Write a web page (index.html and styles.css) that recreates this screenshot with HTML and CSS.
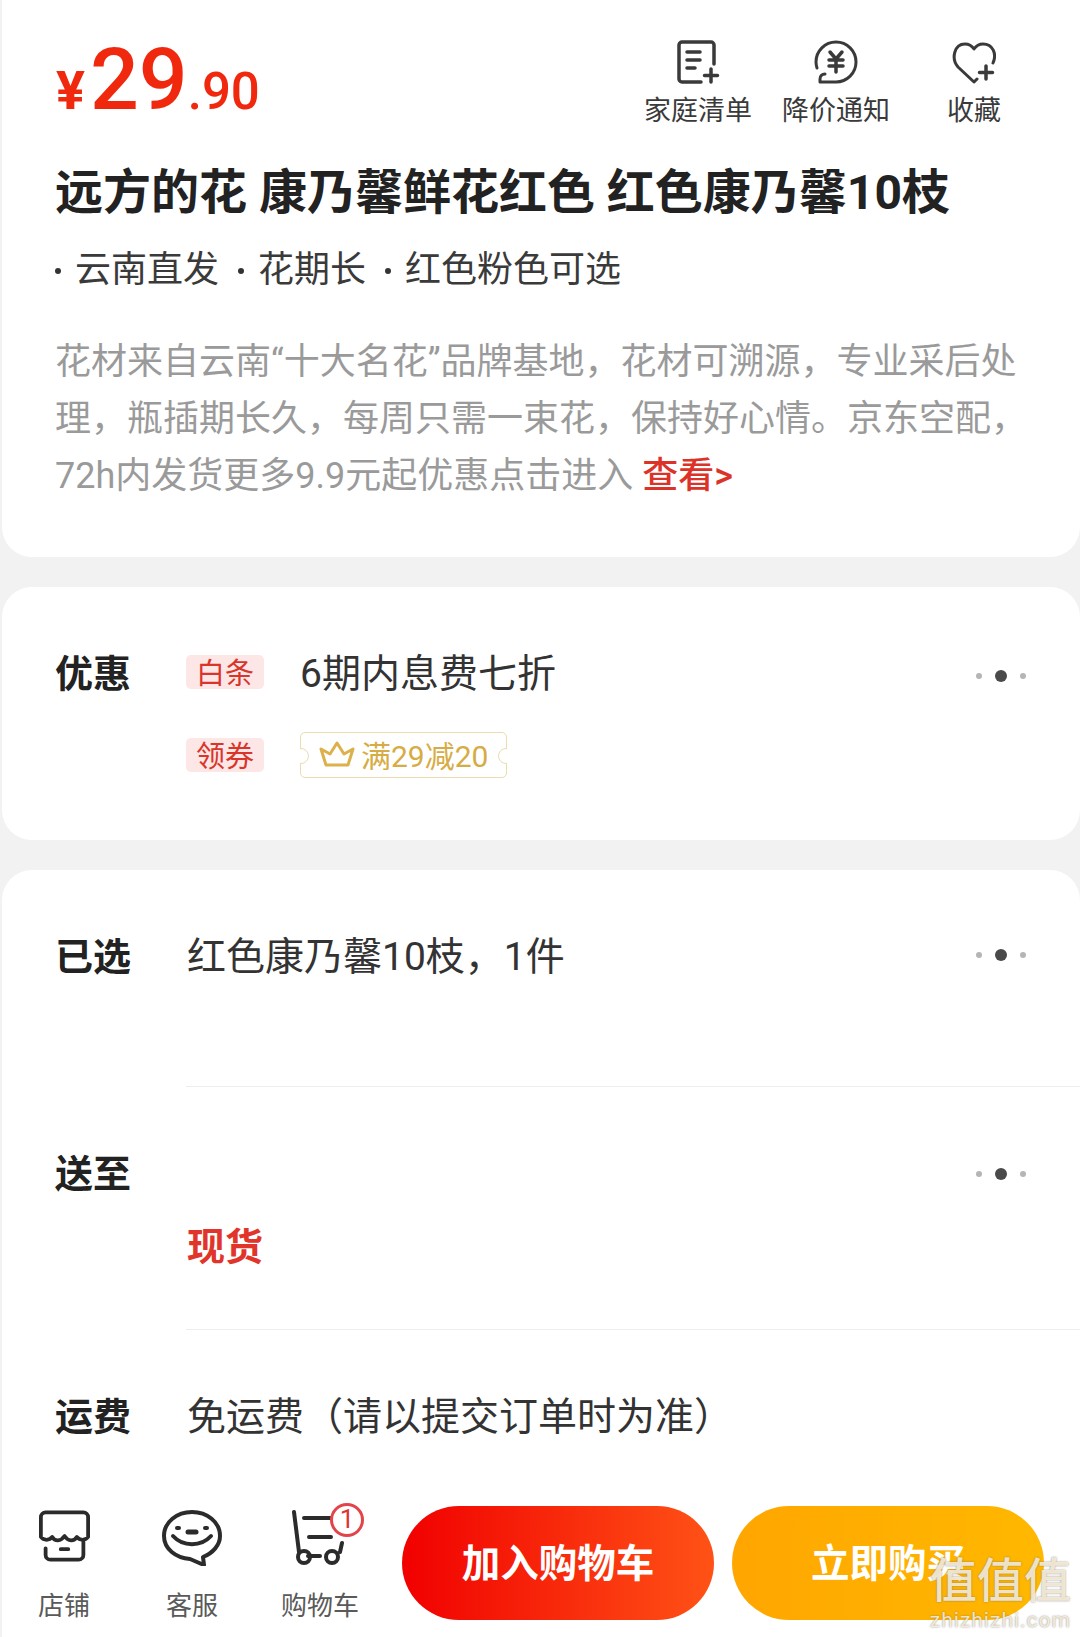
FILE: index.html
```html
<!DOCTYPE html>
<html lang="zh-CN">
  <head>
    <meta charset="UTF-8" />
    <title>远方的花 康乃馨鲜花红色</title>
    <link rel="stylesheet" href="styles.css">
  </head>
  <body>
    <main class="content">
      <section class="card card-top">
        <div class="price-row">
          <div class="price"><span class="yen">¥</span><span class="int">29</span><span class="dec">.90</span></div>
          <div class="actions">
            <div class="action">
              <svg viewBox="0 0 44 44" width="44" height="44" fill="none" stroke="#3a3a3a" stroke-width="3.500" stroke-linecap="round" stroke-linejoin="round">
                <path d="M38 24V5a3 3 0 0 0-3-3H6a3 3 0 0 0-3 3v34a3 3 0 0 0 3 3h19"/>
                <path d="M11 12h13M11 20h13M11 28h8"/>
                <path d="M35 29v13M28.500 35.500h13"/>
              </svg>
              <span>家庭清单</span>
            </div>
            <div class="action">
              <svg viewBox="0 0 44 44" width="44" height="44" fill="none" stroke="#3a3a3a" stroke-width="3" stroke-linecap="round" stroke-linejoin="round">
                <path d="M3 28a20 20 0 0 1-1-6C2 11 11 2 22 2s20 9 20 20-9 20-20 20H6v-3c0-3 2-5 5-5"/>
                <path d="M16 12l6 7 6-7M15 20h14M15 26h14M22 19v13" stroke-width="3.500"/>
              </svg>
              <span>降价通知</span>
            </div>
            <div class="action">
              <svg viewBox="0 0 44 44" width="44" height="44" fill="none" stroke="#3a3a3a" stroke-width="3" stroke-linecap="round" stroke-linejoin="round">
                <path d="M25 39l-3 3L6 27C-1 19 2 4 13 4c4 0 7 2 9 5 2-3 5-5 9-5 10 0 14 10 10 19"/>
                <path d="M34 26v13M27.500 32.500h13" stroke-width="3.500"/>
              </svg>
              <span>收藏</span>
            </div>
          </div>
        </div>
        <h1 class="title">远方的花 康乃馨鲜花红色 红色康乃馨10枝</h1>
        <ul class="points">
          <li>云南直发</li>
          <li>花期长</li>
          <li>红色粉色可选</li>
        </ul>
        <p class="desc">花材来自云南“十大名花”品牌基地，花材可溯源，专业采后处理，瓶插期长久，每周只需一束花，保持好心情。京东空配，72h内发货更多9.9元起优惠点击进入 <a class="more">查看&gt;</a></p>
      </section>

      <section class="card card-promo">
        <div class="promo-row">
          <h3 class="label">优惠</h3>
          <span class="tag">白条</span>
          <span class="value promo-text">6期内息费七折</span>
          <div class="dots"><i></i><i></i><i></i></div>
        </div>
        <div class="promo-row promo-second">
          <span class="tag">领券</span>
          <span class="coupon">
            <svg viewBox="0 0 36 26" width="36" height="26" fill="none" stroke="#dcb04a" stroke-width="3" stroke-linejoin="round">
              <path d="M7 24h22l5-16-9 5-7-11-7 11-9-5z"/>
            </svg>
            满29减20
          </span>
        </div>
      </section>

      <section class="card card-info">
        <div class="info-row row-selected">
          <h3 class="label">已选</h3>
          <span class="value">红色康乃馨10枝，1件</span>
          <div class="dots"><i></i><i></i><i></i></div>
        </div>
        <div class="info-row row-ship">
          <h3 class="label">送至</h3>
          <div class="dots"><i></i><i></i><i></i></div>
          <strong class="stock">现货</strong>
        </div>
        <div class="info-row row-fee">
          <h3 class="label">运费</h3>
          <span class="value">免运费（请以提交订单时为准）</span>
        </div>
      </section>
    </main>

    <footer class="bar">
      <div class="bar-item item-shop">
        <svg viewBox="0 0 54 54" fill="none" stroke="#2b2b2b" stroke-width="4" stroke-linecap="round" stroke-linejoin="round">
          <path d="M7 2h40a5 5 0 0 1 5 5v21c-3 4-9 4-12 0-3 5-9 5-13-1-4 6-10 6-13 1-3 4-9 4-12 0V7a5 5 0 0 1 5-5z"/>
          <path d="M7 40v7a5 5 0 0 0 5 5h30a5 5 0 0 0 5-5V33M23 41h8"/>
        </svg>
        <span>店铺</span>
      </div>
      <div class="bar-item item-service">
        <svg viewBox="0 0 60 56" width="60" height="56" fill="none" stroke="#2b2b2b" stroke-width="4" stroke-linecap="round" stroke-linejoin="round">
          <path d="M30 2C15 2 2 12 2 26c0 13 12 22 26 23l14 6-1-8c10-4 17-12 17-21C58 12 45 2 30 2z"/>
          <path d="M11 26c10 11 28 11 38 0M15 18h2M43 18h2"/>
          <path d="M26 22h8" stroke-width="5"/>
        </svg>
        <span>客服</span>
      </div>
      <div class="bar-item item-cart">
        <div class="cart-icon">
          <svg viewBox="0 0 56 56" width="56" height="56" fill="none" stroke="#2b2b2b" stroke-width="4" stroke-linecap="round" stroke-linejoin="round">
            <path d="M2 2l5 40M12 8h28M17 27h22M16 46h12M50 33l-2 9"/>
            <circle cx="12" cy="47" r="6"/>
            <circle cx="40" cy="47" r="6"/>
          </svg>
          <span class="badge">1</span>
        </div>
        <span>购物车</span>
      </div>
      <button class="btn btn-cart">加入购物车</button>
      <button class="btn btn-buy">立即购买</button>
      <div class="watermark">
        <span class="wm-logo">值值值</span>
        <span class="wm-url">zhizhizhi.com</span>
      </div>
    </footer>
  </body>
</html>
```
FILE: styles.css
```css
* {
  box-sizing: border-box;
}

body {
  margin: 0;
  width: 1080px;
  height: 1637px;
  overflow: hidden;
  display: flex;
  flex-direction: column;
  position: relative;
  border-left: 2px solid #f2f2f2;
  background-color: #f2f2f2;
  color: #2b2b2b;
  font-family: "Roboto", "Noto Sans CJK SC", sans-serif;
}

.content {
  flex: 1;
  min-height: 0;
  overflow: hidden;
  display: flex;
  flex-direction: column;
}

.card {
  background-color: #fff;
  border-radius: 30px;
  margin-bottom: 30px;
  flex-shrink: 0;
}

/* top card */
.card-top {
  height: 557px;
  padding: 0 53px;
  border-radius: 0 0 30px 30px;
}

.price-row {
  display: flex;
  justify-content: space-between;
  height: 140px;
}

.price {
  color: #f0290e;
  font-weight: 500;
  padding-top: 29px;
  margin-left: 1px;
}

.price .yen {
  font-size: 54px;
  font-weight: 700;
}

.price .int {
  font-size: 86px;
  margin-left: 5px;
}

.price .dec {
  font-size: 51px;
}

.actions {
  display: flex;
  padding-top: 40px;
  margin-right: -16px;
}

.action {
  width: 138px;
  display: flex;
  flex-direction: column;
  align-items: center;
  gap: 8px;
  font-size: 27px;
  line-height: 38px;
  color: #3a3a3a;
}

.title {
  margin: 21px 0 0;
  font-size: 48px;
  line-height: 64px;
  font-weight: 700;
  color: #222;
  white-space: nowrap;
}

.points {
  list-style: none;
  display: flex;
  gap: 19px;
  margin: 20px 0 0;
  padding: 0;
  font-size: 36px;
  line-height: 50px;
  color: #3a3a3a;
}

.points li::before {
  content: "";
  display: inline-block;
  width: 6px;
  height: 6px;
  border-radius: 50%;
  background-color: #333;
  margin-right: 14px;
  vertical-align: 8px;
}

.desc {
  margin: 39px -10px 0 0;
  font-size: 36px;
  line-height: 57px;
  color: #9a9a9a;
}

.more {
  color: #dc3329;
  font-weight: 500;
}

/* promo card */
.card-promo {
  height: 253px;
  padding: 56px 53px 0;
}

.promo-row {
  display: flex;
  align-items: center;
  height: 54px;
  position: relative;
}

.promo-row .tag {
  margin-top: 4px;
}

.promo-second {
  margin: 31px 0 0 131px;
}

.promo-second .tag {
  margin-top: 0;
}

.label {
  margin: 0;
  width: 131px;
  flex-shrink: 0;
  font-size: 38px;
  font-weight: 700;
  color: #222;
}

.tag {
  width: 78px;
  height: 34px;
  display: flex;
  align-items: center;
  justify-content: center;
  flex-shrink: 0;
  padding-bottom: 3px;
  border-radius: 5px;
  background-color: #fde6e6;
  color: #d8352b;
  font-size: 29px;
}

.value {
  font-size: 39px;
  color: #333;
}

.promo-text {
  margin-left: 36px;
}

.coupon {
  display: flex;
  align-items: center;
  gap: 6px;
  width: 207px;
  height: 46px;
  margin-left: 36px;
  padding: 0 0 3px 18px;
  border: 1px solid #ecdcae;
  border-radius: 5px;
  color: #d6ac45;
  font-size: 30px;
  position: relative;
}

.coupon::before,
.coupon::after {
  content: "";
  position: absolute;
  top: 15px;
  width: 14px;
  height: 14px;
  border: 1px solid #ecdcae;
  border-radius: 50%;
  background-color: #fff;
}

.coupon::before {
  left: -8px;
  clip-path: inset(-1px -1px -1px 7px);
}

.coupon::after {
  right: -8px;
  clip-path: inset(-1px 7px -1px -1px);
}

.dots {
  position: absolute;
  right: 1px;
  top: 27px;
  display: flex;
  align-items: center;
  gap: 13px;
}

.dots i {
  width: 6px;
  height: 6px;
  border-radius: 50%;
  background-color: #b5b5b5;
}

.dots i:nth-child(2) {
  width: 12px;
  height: 12px;
  background-color: #4a4a4a;
}

/* info card */
.card-info {
  flex: 1;
  margin-bottom: 0;
  border-radius: 30px 30px 0 0;
}

.info-row {
  position: relative;
  display: flex;
  flex-wrap: wrap;
  align-items: center;
  padding: 0 0 0 53px;
}

.info-row .label {
  width: 132px;
}

.row-selected {
  height: 217px;
  align-items: flex-start;
}

.row-selected .label,
.row-selected .value {
  margin-top: 60px;
  line-height: 54px;
}

.row-selected .dots {
  right: 54px;
  top: 79px;
}

.row-selected::after,
.row-ship::after {
  content: "";
  position: absolute;
  left: 184px;
  right: 0;
  bottom: 0;
  border-bottom: 1px solid #eee;
}

.row-ship {
  height: 243px;
  align-items: flex-start;
}

.row-ship .label {
  width: 100%;
  margin-top: 60px;
  line-height: 54px;
}

.row-ship .dots {
  right: 54px;
  top: 81px;
}

.stock {
  margin: -37px 0 0 132px;
  font-size: 38px;
  line-height: 54px;
  color: #e1352b;
}

.row-fee {
  padding-top: 60px;
}

.row-fee .label,
.row-fee .value {
  line-height: 54px;
}

/* bottom bar */
.bar {
  height: 147px;
  flex-shrink: 0;
  background-color: #fff;
  display: flex;
  align-items: flex-start;
  position: relative;
}

.bar-item {
  display: flex;
  flex-direction: column;
  align-items: center;
  width: 128px;
  padding-top: 20px;
  font-size: 26px;
  line-height: 36px;
  color: #5a5a5a;
  flex-shrink: 0;
}

.item-shop {
  margin-left: -2px;
}

.bar-item svg {
  display: block;
  height: 56px;
  margin-bottom: 22px;
}

.item-shop svg {
  width: 51px;
  height: 52px;
  margin-bottom: 26px;
}

.cart-icon {
  position: relative;
}

.badge {
  position: absolute;
  top: -7px;
  right: -16px;
  width: 34px;
  height: 34px;
  border: 3px solid #e2444a;
  border-radius: 50%;
  background-color: #fff;
  color: #d33;
  font-size: 26px;
  line-height: 27px;
  text-align: center;
}

.btn {
  width: 312px;
  height: 114px;
  margin-top: 16px;
  border: 0;
  border-radius: 57px;
  color: #fff;
  font-family: inherit;
  font-size: 38.500px;
  font-weight: 700;
  padding: 0 0 6px;
}

.btn-cart {
  margin-left: 18px;
  background: linear-gradient(90deg, #f10000, #ff5216);
}

.btn-buy {
  margin-left: 18px;
  background: linear-gradient(90deg, #ffa600, #ffb800);
}

.watermark {
  position: absolute;
  right: 9px;
  bottom: 4px;
  display: flex;
  flex-direction: column;
  align-items: center;
  color: rgba(255, 244, 222, 0.85);
  text-shadow: 0 0 2px rgba(110, 110, 110, 0.8);
}

.wm-logo {
  font-size: 47px;
  line-height: 52px;
  font-weight: 500;
}

.wm-url {
  font-size: 21px;
  line-height: 26px;
  letter-spacing: 1px;
}
```
